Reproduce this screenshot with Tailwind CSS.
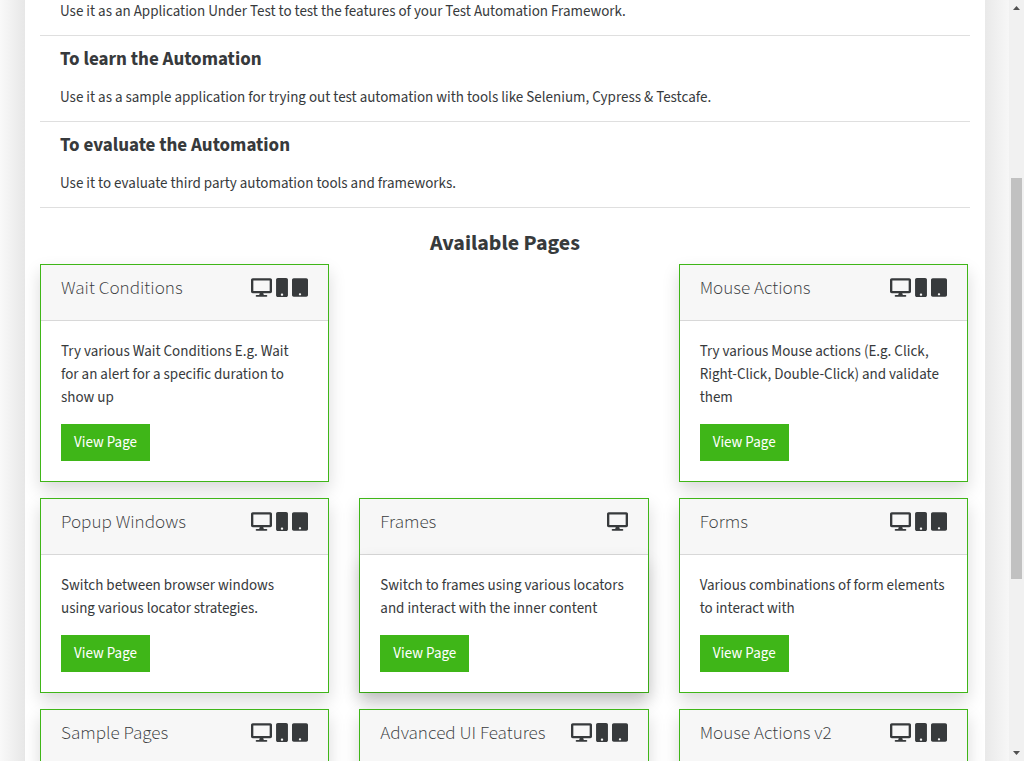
<!DOCTYPE html>
<html lang="en">
<head>
<meta charset="utf-8">
<meta name="viewport" content="width=device-width, initial-scale=1">
<title>Available Pages</title>
<script src="https://cdn.jsdelivr.net/npm/@tailwindcss/browser@4"></script>
</head>
<body class="flex h-screen overflow-hidden bg-[#f9f9f9] font-['Source_Sans_3','Noto_Sans_CJK_SC',sans-serif] text-[15px] leading-[23px] text-[#373a3c]">
<svg class="hidden">
  <symbol id="desktop" viewBox="0 0 576 512"><path d="M528 0H48C21.5 0 0 21.5 0 48v320c0 26.500 21.500 48 48 48h192l-16 48h-72c-13.300 0-24 10.700-24 24s10.700 24 24 24h272c13.300 0 24-10.700 24-24s-10.700-24-24-24h-72l-16-48h192c26.500 0 48-21.500 48-48V48c0-26.500-21.500-48-48-48zm-16 352H64V64h448v288z"/></symbol>
  <symbol id="mobile" viewBox="0 0 320 512"><path d="M272 0H48C21.5 0 0 21.5 0 48v416c0 26.500 21.500 48 48 48h224c26.500 0 48-21.500 48-48V48c0-26.500-21.500-48-48-48zM160 480c-17.700 0-32-14.300-32-32s14.300-32 32-32 32 14.300 32 32-14.300 32-32 32z"/></symbol>
  <symbol id="tablet" viewBox="0 0 448 512"><path d="M400 0H48C21.5 0 0 21.5 0 48v416c0 26.500 21.500 48 48 48h352c26.500 0 48-21.500 48-48V48c0-26.500-21.500-48-48-48zM224 480c-17.700 0-32-14.300-32-32s14.300-32 32-32 32 14.300 32 32-14.300 32-32 32z"/></symbol>
</svg>
<div class="h-full min-w-0 flex-1 overflow-hidden bg-[linear-gradient(90deg,#f9f9f9,#e7e7e7_25px,#e9e9e9_calc(100%-24px),#f7f7f7)] pr-6 pl-[25px]">
  <main class="min-h-full bg-white px-[15px]">
    <section>
      <div class="border-b border-[#dfdfdf] px-5 pb-3">
        <p>Use it as an Application Under Test to test the features of your Test Automation Framework.</p>
      </div>
      <div class="border-b border-[#dfdfdf] px-5 pt-[13px] pb-3">
        <h2 class="mb-[15px] text-[19px] leading-[22px] font-bold">To learn the Automation</h2>
        <p>Use it as a sample application for trying out test automation with tools like Selenium, Cypress &amp; Testcafe.</p>
      </div>
      <div class="border-b border-[#dfdfdf] px-5 pt-[13px] pb-3">
        <h2 class="mb-[15px] text-[19px] leading-[22px] font-bold">To evaluate the Automation</h2>
        <p>Use it to evaluate third party automation tools and frameworks.</p>
      </div>
    </section>
    <h1 class="mt-[21px] mb-[7px] text-center text-[22px] leading-7 font-bold">Available Pages</h1>
    <section class="grid grid-cols-3 gap-x-[30px] gap-y-4 pr-0.5">
      <article class="border border-[#3fb618] bg-white shadow-[0_8px_16px_rgb(0_0_0/0.15)]">
        <header class="flex h-14 items-start justify-between border-b border-[#d8d8d8] bg-[#f7f7f7] px-5 pt-[13px]">
          <h3 class="text-[19px] leading-[22px] font-light">Wait Conditions</h3>
          <span class="flex gap-1 fill-[#373a3c]"><svg class="h-[19px] w-[21px]"><use href="#desktop"/></svg><svg class="h-[19px] w-3"><use href="#mobile"/></svg><svg class="h-[19px] w-4"><use href="#tablet"/></svg></span>
        </header>
        <div class="px-5 pt-[19px] pb-5">
          <p class="mb-[15px]">Try various Wait Conditions E.g. Wait for an alert for a specific duration to show up</p>
          <a href="#" class="inline-block bg-[#3fb618] px-[13px] py-[7px] align-top text-white">View Page</a>
        </div>
      </article>
      <article class="col-start-3 border border-[#3fb618] bg-white shadow-[0_8px_16px_rgb(0_0_0/0.15)]">
        <header class="flex h-14 items-start justify-between border-b border-[#d8d8d8] bg-[#f7f7f7] px-5 pt-[13px]">
          <h3 class="text-[19px] leading-[22px] font-light">Mouse Actions</h3>
          <span class="flex gap-1 fill-[#373a3c]"><svg class="h-[19px] w-[21px]"><use href="#desktop"/></svg><svg class="h-[19px] w-3"><use href="#mobile"/></svg><svg class="h-[19px] w-4"><use href="#tablet"/></svg></span>
        </header>
        <div class="px-5 pt-[19px] pb-5">
          <p class="mb-[15px]">Try various Mouse actions (E.g. Click, Right-Click, Double-Click) and validate them</p>
          <a href="#" class="inline-block bg-[#3fb618] px-[13px] py-[7px] align-top text-white">View Page</a>
        </div>
      </article>
      <article class="border border-[#3fb618] bg-white shadow-[0_8px_16px_rgb(0_0_0/0.15)]">
        <header class="flex h-14 items-start justify-between border-b border-[#d8d8d8] bg-[#f7f7f7] px-5 pt-[13px]">
          <h3 class="text-[19px] leading-[22px] font-light">Popup Windows</h3>
          <span class="flex gap-1 fill-[#373a3c]"><svg class="h-[19px] w-[21px]"><use href="#desktop"/></svg><svg class="h-[19px] w-3"><use href="#mobile"/></svg><svg class="h-[19px] w-4"><use href="#tablet"/></svg></span>
        </header>
        <div class="px-5 pt-[19px] pb-5">
          <p class="mb-[15px]">Switch between browser windows using various locator strategies.</p>
          <a href="#" class="inline-block bg-[#3fb618] px-[13px] py-[7px] align-top text-white">View Page</a>
        </div>
      </article>
      <article class="border border-[#3fb618] bg-white shadow-[0_8px_16px_rgb(0_0_0/0.15)]">
        <header class="flex h-14 items-start justify-between border-b border-[#d8d8d8] bg-[#f7f7f7] px-5 pt-[13px]">
          <h3 class="text-[19px] leading-[22px] font-light">Frames</h3>
          <span class="flex gap-1 fill-[#373a3c]"><svg class="h-[19px] w-[21px]"><use href="#desktop"/></svg></span>
        </header>
        <div class="px-5 pt-[19px] pb-5 shadow-[0_8px_16px_rgb(0_0_0/0.15)]">
          <p class="mb-[15px]">Switch to frames using various locators and interact with the inner content</p>
          <a href="#" class="inline-block bg-[#3fb618] px-[13px] py-[7px] align-top text-white">View Page</a>
        </div>
      </article>
      <article class="border border-[#3fb618] bg-white shadow-[0_8px_16px_rgb(0_0_0/0.15)]">
        <header class="flex h-14 items-start justify-between border-b border-[#d8d8d8] bg-[#f7f7f7] px-5 pt-[13px]">
          <h3 class="text-[19px] leading-[22px] font-light">Forms</h3>
          <span class="flex gap-1 fill-[#373a3c]"><svg class="h-[19px] w-[21px]"><use href="#desktop"/></svg><svg class="h-[19px] w-3"><use href="#mobile"/></svg><svg class="h-[19px] w-4"><use href="#tablet"/></svg></span>
        </header>
        <div class="px-5 pt-[19px] pb-5">
          <p class="mb-[15px]">Various combinations of form elements to interact with</p>
          <a href="#" class="inline-block bg-[#3fb618] px-[13px] py-[7px] align-top text-white">View Page</a>
        </div>
      </article>
      <article class="border border-[#3fb618] bg-white shadow-[0_8px_16px_rgb(0_0_0/0.15)]">
        <header class="flex h-14 items-start justify-between border-b border-[#d8d8d8] bg-[#f7f7f7] px-5 pt-[13px]">
          <h3 class="text-[19px] leading-[22px] font-light">Sample Pages</h3>
          <span class="flex gap-1 fill-[#373a3c]"><svg class="h-[19px] w-[21px]"><use href="#desktop"/></svg><svg class="h-[19px] w-3"><use href="#mobile"/></svg><svg class="h-[19px] w-4"><use href="#tablet"/></svg></span>
        </header>
      </article>
      <article class="border border-[#3fb618] bg-white shadow-[0_8px_16px_rgb(0_0_0/0.15)]">
        <header class="flex h-14 items-start justify-between border-b border-[#d8d8d8] bg-[#f7f7f7] px-5 pt-[13px]">
          <h3 class="text-[19px] leading-[22px] font-light">Advanced UI Features</h3>
          <span class="flex gap-1 fill-[#373a3c]"><svg class="h-[19px] w-[21px]"><use href="#desktop"/></svg><svg class="h-[19px] w-3"><use href="#mobile"/></svg><svg class="h-[19px] w-4"><use href="#tablet"/></svg></span>
        </header>
      </article>
      <article class="border border-[#3fb618] bg-white shadow-[0_8px_16px_rgb(0_0_0/0.15)]">
        <header class="flex h-14 items-start justify-between border-b border-[#d8d8d8] bg-[#f7f7f7] px-5 pt-[13px]">
          <h3 class="text-[19px] leading-[22px] font-light">Mouse Actions v2</h3>
          <span class="flex gap-1 fill-[#373a3c]"><svg class="h-[19px] w-[21px]"><use href="#desktop"/></svg><svg class="h-[19px] w-3"><use href="#mobile"/></svg><svg class="h-[19px] w-4"><use href="#tablet"/></svg></span>
        </header>
      </article>
    </section>
  </main>
</div>
<div class="flex w-[15px] flex-col items-center bg-[#f1f1f1] py-1.5" aria-hidden="true">
  <svg class="h-1 w-[7px] fill-[#505050]" viewBox="0 0 7 4"><path d="M0 4L3.500 0L7 4z"/></svg>
  <div class="flex w-[11px] flex-1 flex-col">
    <div class="flex-[168]"></div>
    <div class="flex-[401] bg-[#c1c1c1]"></div>
    <div class="flex-[172]"></div>
  </div>
  <svg class="h-1 w-[7px] fill-[#505050]" viewBox="0 0 7 4"><path d="M0 0H7L3.500 4z"/></svg>
</div>
</body>
</html>
